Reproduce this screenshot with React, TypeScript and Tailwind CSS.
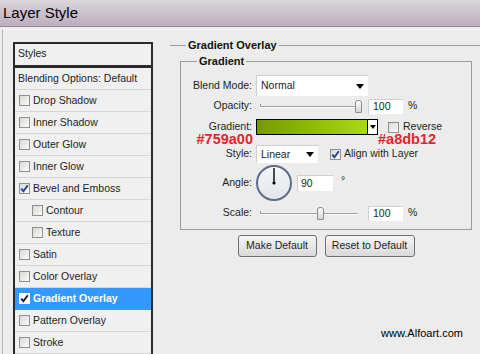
import React from "react";

type Item = { label: string; checked?: boolean; sub?: boolean; active?: boolean };

const items: Item[] = [
  { label: "Drop Shadow" },
  { label: "Inner Shadow" },
  { label: "Outer Glow" },
  { label: "Inner Glow" },
  { label: "Bevel and Emboss", checked: true },
  { label: "Contour", sub: true },
  { label: "Texture", sub: true },
  { label: "Satin" },
  { label: "Color Overlay" },
  { label: "Gradient Overlay", checked: true, active: true },
  { label: "Pattern Overlay" },
  { label: "Stroke" },
];

function Check({ checked, white }: { checked?: boolean; white?: boolean }) {
  return (
    <span
      className={`flex h-[11px] w-[11px] shrink-0 items-center justify-center border ${
        white ? "border-white bg-white" : "border-[#8f9090] bg-gradient-to-br from-[#d9d9d4] to-[#fafaf8]"
      }`}
    >
      {checked && (
        <svg width="9" height="9" viewBox="0 0 9 9">
          <path d="M1.3 4.6 L3.4 7.2 L7.8 1.2" stroke={white ? "#10163a" : "#21409a"} strokeWidth="1.9" fill="none" />
        </svg>
      )}
    </span>
  );
}

function Arrow() {
  return (
    <svg width="8" height="5" viewBox="0 0 8 5">
      <path d="M0 0 H8 L4 5 Z" fill="#000" />
    </svg>
  );
}

function Select({ value, width, height }: { value: string; width: string; height: string }) {
  return (
    <div className={`flex ${width} ${height} items-center justify-between border-l border-t border-[#cfcfcf] bg-white pl-[4px] pr-[4px]`}>
      <span>{value}</span>
      <Arrow />
    </div>
  );
}

function Slider({ pos }: { pos: number }) {
  return (
    <div className="relative h-[16px] w-[108px]">
      <div className="absolute left-[4px] top-[6px] h-[4px] w-[1px] bg-[#9a9a9a]" />
      <div className="absolute left-[4px] right-[6px] top-[8px] h-[2px] border-t border-b border-t-[#a0a0a0] border-b-white" />
      <div
        className="absolute top-[2px] h-[13px] w-[7px] rounded-t-[3px] rounded-b-[1px] border border-[#8c8c8c] bg-gradient-to-b from-[#fdfdfd] to-[#d6d6d6]"
        style={{ left: pos }}
      />
    </div>
  );
}

function Field({ value, width }: { value: string; width: string }) {
  return (
    <div className={`flex h-[15px] ${width} items-center border-l border-t border-[#d0d0d0] bg-white pl-[4px]`}>{value}</div>
  );
}

function Label({ children }: { children: React.ReactNode }) {
  return <div className="w-[71px] shrink-0 text-right">{children}</div>;
}

export default function App() {
  return (
    <div className="flex h-[354px] w-[480px] flex-col overflow-hidden bg-[#ececec] font-['Liberation_Sans',Arial,sans-serif] text-[10.5px] text-[#1e1e1e]">
      {/* Title bar */}
      <div className="flex h-[27px] shrink-0 items-center border-b border-[#948696] bg-gradient-to-b from-[#dcd6dd] via-[#cbc1cc] to-[#bcaebe] pl-[3px] text-[15px] text-black">
        Layer Style
      </div>

      <div className="ml-[2px] mt-[2px] flex flex-1 border-l border-t border-l-[#b4b4b4] border-t-[#f8f8f8]">
        {/* Styles list */}
        <div className="ml-[10px] mt-[12px] flex w-[140px] shrink-0 flex-col self-start border-2 border-[#2a2a2a] bg-[#f0f0f0]">
          <div className="flex h-[24px] items-center border-b-[3px] border-[#2a2a2a] pl-[3px] pb-[1px]">Styles</div>
          <div className="flex h-[22px] items-center border-b border-[#d6d6d6] pl-[3px]">Blending Options: Default</div>
          {items.map((it) => (
            <div
              key={it.label}
              className={`flex h-[22px] items-center gap-[3px] border-b ${
                it.active ? "border-[#3399ff] bg-[#3399ff] font-bold text-white" : "border-[#d6d6d6]"
              } ${it.sub ? "pl-[17px]" : "pl-[4px]"}`}
            >
              <Check checked={it.checked} white={it.active} />
              <span>{it.label}</span>
            </div>
          ))}
        </div>

        {/* Right side */}
        <fieldset className="ml-[17px] mt-[9px] flex-1 self-start border-t border-[#9b9b9b]">
          <legend className="ml-[16px] px-[2px] text-[11px] font-bold leading-[13px] text-[#111]">Gradient Overlay</legend>

          <fieldset className="ml-[10px] mt-[3px] w-[292px] border border-[#9b9b9b] pb-[8px]">
            <legend className="ml-[16px] px-[2px] text-[11px] font-bold leading-[13px] text-[#111]">Gradient</legend>

            <div className="mt-[7px] flex h-[21px] items-center">
              <Label>Blend Mode:</Label>
              <div className="ml-[4px]">
                <Select value="Normal" width="w-[112px]" height="h-[21px]" />
              </div>
            </div>

            <div className="mt-[2px] flex h-[16px] items-center">
              <Label>Opacity:</Label>
              <div className="ml-[4px] flex items-center">
                <Slider pos={99} />
                <div className="ml-[4px]">
                  <Field value="100" width="w-[35px]" />
                </div>
                <span className="ml-[5px]">%</span>
              </div>
            </div>

            <div className="mt-[5px] flex h-[16px] items-center">
              <Label>Gradient:</Label>
              <div className="ml-[4px] flex items-center">
                <div className="h-[16px] w-[112px] border border-black bg-gradient-to-r from-[#759a00] to-[#a8db12]" />
                <div className="flex h-[16px] w-[10px] items-center justify-center border border-l-0 border-black bg-white">
                  <svg width="6" height="4" viewBox="0 0 6 4">
                    <path d="M0 0 H6 L3 4 Z" fill="#000" />
                  </svg>
                </div>
                <div className="ml-[10px]">
                  <Check />
                </div>
                <span className="ml-[4px]">Reverse</span>
              </div>
            </div>

            <div className="-mt-[1px] flex h-[11px] items-center text-[14.5px] font-bold leading-[11px] text-[#e3262b]">
              <div className="w-[72px] shrink-0 text-right">#759a00</div>
              <div className="ml-[125px]">#a8db12</div>
            </div>

            <div className="flex h-[18px] items-center">
              <Label>Style:</Label>
              <div className="ml-[4px] flex items-center">
                <Select value="Linear" width="w-[62px]" height="h-[18px]" />
                <div className="ml-[12px]">
                  <Check checked />
                </div>
                <span className="ml-[3px]">Align with Layer</span>
              </div>
            </div>

            <div className="mt-[2px] flex h-[36px] items-center">
              <Label>Angle:</Label>
              <div className="ml-[4px] flex items-center">
                <div className="flex h-[36px] w-[36px] items-center justify-center rounded-full border-2 border-[#5d6c87] bg-gradient-to-b from-[#f4f6f8] to-[#e2e6ea]">
                  <svg width="32" height="32" viewBox="0 0 32 32">
                    <path d="M16 16 V1" stroke="#000" strokeWidth="1.4" />
                    <circle cx="16" cy="16" r="1.6" fill="#000" />
                  </svg>
                </div>
                <div className="ml-[5px]">
                  <div className="flex h-[16px] w-[36px] items-center border-l border-t border-[#d0d0d0] bg-white pl-[3px]">90</div>
                </div>
                <span className="-mt-[5px] ml-[8px]">°</span>
              </div>
            </div>

            <div className="mt-[4px] flex h-[16px] items-center">
              <Label>Scale:</Label>
              <div className="ml-[4px] flex items-center">
                <Slider pos={61} />
                <div className="ml-[4px]">
                  <Field value="100" width="w-[35px]" />
                </div>
                <span className="ml-[5px]">%</span>
              </div>
            </div>
          </fieldset>

          <div className="ml-[10px] mt-[5px] flex w-[292px] justify-center gap-[8px]">
            <button className="h-[22px] w-[79px] rounded-[3px] border border-[#707070] bg-gradient-to-b from-[#f6f6f6] to-[#d9d9d9] text-[10.5px] text-[#1e1e1e]">
              Make Default
            </button>
            <button className="h-[22px] w-[90px] rounded-[3px] border border-[#707070] bg-gradient-to-b from-[#f6f6f6] to-[#d9d9d9] text-[10.5px] text-[#1e1e1e]">
              Reset to Default
            </button>
          </div>

          <div className="mt-[70px] pr-[17px] text-right text-[11px] leading-[13px] text-black">www.Alfoart.com</div>
        </fieldset>
      </div>
    </div>
  );
}
